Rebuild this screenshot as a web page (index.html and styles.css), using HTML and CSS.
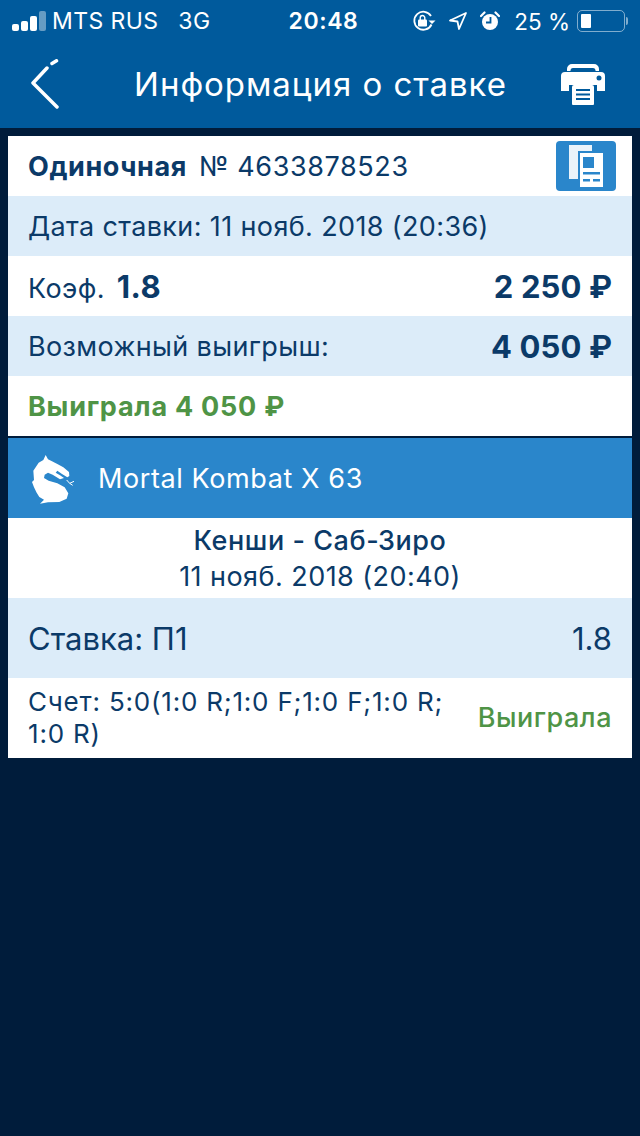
FILE: index.html
```html
<!DOCTYPE html>
<html lang="en">
<head>
    <meta charset="UTF-8">
    <meta name="viewport" content="width=device-width, initial-scale=1.0">
    <title>Информация о ставке</title>
    <link rel="stylesheet" href="styles.css">
</head>
<body>
    <header class="top-bar">
        <div class="status-bar">
            <div class="status-left">
                <span class="signal"><i></i><i></i><i></i><i class="off"></i></span>
                <span>MTS RUS</span>
                <span class="net">3G</span>
            </div>
            <div class="status-time">20:48</div>
            <div class="status-right">
                <svg class="icon-rotate" width="24" height="22" viewBox="0 0 24 22">
                    <path d="M19 6A9 9 0 1 0 19.500 14.500" fill="none" stroke="#fff" stroke-width="1.800"/>
                    <path d="M16.500 10.500h7l-3.500 3.500z" fill="#fff"/>
                    <rect x="6" y="9.500" width="9" height="7" rx="1" fill="#fff"/>
                    <path d="M8.200 10V7.800a2.300 2.300 0 0 1 4.600 0V10" fill="none" stroke="#fff" stroke-width="1.400"/>
                </svg>
                <svg class="icon-location" width="20" height="20" viewBox="0 0 20 20">
                    <path d="M18 2 2 9.500l7.500 1 1.500 7.500z" fill="none" stroke="#fff" stroke-width="1.800" stroke-linejoin="round"/>
                </svg>
                <svg class="icon-alarm" width="20" height="20" viewBox="0 0 20 20">
                    <circle cx="10" cy="11" r="8" fill="#fff"/>
                    <path d="M10.500 6v5.500H6" fill="none" stroke="#005a9c" stroke-width="1.800"/>
                    <path d="M1 5 4.500 1.500M19 5 15.500 1.500" stroke="#fff" stroke-width="2.200" stroke-linecap="round"/>
                </svg>
                <span class="battery-text">25 %</span>
                <span class="battery"><span class="battery-level"></span></span>
                <span class="battery-tip"></span>
            </div>
        </div>
        <nav class="nav-bar">
            <svg class="back-icon" width="30" height="50" viewBox="0 0 30 50">
                <path d="M17 9 3 24 27 48" fill="none" stroke="#fff" stroke-width="3.500" stroke-linecap="round" stroke-linejoin="round"/>
                <path d="M22 4.500 26.500 1.800" fill="none" stroke="#fff" stroke-width="3.500" stroke-linecap="round"/>
            </svg>
            <h1>Информация о ставке</h1>
            <svg class="print-icon" width="46" height="44" viewBox="0 0 46 44">
                <path d="M7 9V7a5 5 0 0 1 5-5h22a5 5 0 0 1 5 5v2h-3.500V8a2.500 2.500 0 0 0-2.500-2H13a2.500 2.500 0 0 0-2.500 2v1z" fill="#fff"/>
                <path d="M5 10h36a4 4 0 0 1 4 4v15H37V23H9v6H1V14a4 4 0 0 1 4-4z" fill="#fff"/>
                <circle cx="39" cy="16" r="2.500" fill="#005a9c"/>
                <path d="M12 25a2 2 0 0 1 2-2h18a2 2 0 0 1 2 2v17a1 1 0 0 1-1 1H13a1 1 0 0 1-1-1z" fill="#fff"/>
                <path d="M16 28h14M16 32.500h14M16 37h14" stroke="#005a9c" stroke-width="1.800"/>
            </svg>
        </nav>
    </header>

    <main class="bet-card">
        <div class="row row-white">
            <div class="bet-title"><b>Одиночная</b> <span>№ 4633878523</span></div>
            <button class="copy-btn">
                <svg width="36" height="44" viewBox="0 0 36 44">
                    <path d="M1 1h23v6H10v28H1z" fill="#eaf3fa"/>
                    <path d="M12 9h23v34H12z" fill="#fff"/>
                    <path d="M15 13h11v11H15z" fill="#2a86cb"/>
                    <path d="M15 28h17v2.500H15zM15 35h7v2.500h-7zM25 35h7v2.500h-7z" fill="#2a86cb"/>
                </svg>
            </button>
        </div>
        <div class="row row-blue">Дата ставки: 11 нояб. 2018 (20:36)</div>
        <div class="row row-white">
            <div>Коэф. <b class="coef">1.8</b></div>
            <b class="sum">2 250 ₽</b>
        </div>
        <div class="row row-blue">
            <div>Возможный выигрыш:</div>
            <b class="sum">4 050 ₽</b>
        </div>
        <div class="row row-white result">Выиграла 4 050 ₽</div>

        <div class="league">
            <svg class="dragon" width="60" height="56" viewBox="0 0 180 168">
                <path d="M65 15 72 28 84 34 100 42 118 52 135 66 136 78 130 82 114 72 100 62 95 68 108 76 120 84 108 88 86 74 72 68 62 74 60 84 74 92 100 100 122 112 133 130 128 146 106 156 72 157 48 161 60 149 46 141 38 128 30 112 24 96 30 90 28 62 44 38 58 30z" fill="#fff"/>
                <path d="M128 90 137 100 150 94M137 100 146 106" fill="none" stroke="#fff" stroke-width="3"/>
            </svg>
            <span>Mortal Kombat X 63</span>
        </div>
        <div class="match">
            <div class="match-name">Кенши - Саб-Зиро</div>
            <div class="match-date">11 нояб. 2018 (20:40)</div>
        </div>
        <div class="outcome">
            <span>Ставка: П1</span>
            <span>1.8</span>
        </div>
        <div class="score">
            <div class="score-text">Счет: 5:0(1:0 R;1:0 F;1:0 F;1:0 R;<br>1:0 R)</div>
            <div class="score-result">Выиграла</div>
        </div>
    </main>
</body>
</html>
```

FILE: styles.css
```css
* {
    box-sizing: border-box;
    margin: 0;
    padding: 0;
}

body {
    width: 640px;
    height: 1136px;
    overflow: hidden;
    font-family: 'Inter', 'Liberation Sans', sans-serif;
    background-color: #001c3b;
    color: #0b3a68;
}

.top-bar {
    height: 128px;
    background-color: #005a9c;
    color: white;
}

.status-bar {
    height: 40px;
    padding: 2px 12px 0 12px;
    display: grid;
    grid-template-columns: 1fr auto 1fr;
    align-items: center;
    font-size: 23px;
}

.status-left {
    display: flex;
    align-items: center;
    gap: 6px;
    letter-spacing: 0.4px;
}

.net {
    margin-left: 14px;
}

.signal {
    display: flex;
    align-items: flex-end;
    gap: 2px;
    height: 20px;
}

.signal i {
    width: 7px;
    background-color: white;
    border-radius: 2px;
}

.signal i:nth-child(1) { height: 7px; }
.signal i:nth-child(2) { height: 10px; }
.signal i:nth-child(3) { height: 15px; }
.signal i:nth-child(4) { height: 20px; }

.signal i.off {
    background-color: rgba(255, 255, 255, 0.4);
}

.status-time {
    margin-left: 7px;
    font-weight: 600;
    letter-spacing: 0.6px;
}

.status-right {
    display: flex;
    align-items: center;
    justify-content: flex-end;
    font-size: 22.500px;
}

.icon-rotate {
    margin-right: 12px;
}

.icon-location {
    margin-right: 12px;
}

.icon-alarm {
    margin-right: 14px;
}

.battery-text {
    margin-right: 7px;
}

.battery {
    width: 48px;
    height: 22px;
    padding: 3px;
    border: 1.500px solid rgba(255, 255, 255, 0.5);
    border-radius: 5px;
}

.battery-level {
    display: block;
    width: 10px;
    height: 100%;
    background-color: white;
    border-radius: 1px;
}

.battery-tip {
    width: 2px;
    height: 8px;
    margin-left: 1px;
    background-color: rgba(255, 255, 255, 0.5);
    border-radius: 0 2px 2px 0;
}

.nav-bar {
    height: 88px;
    padding: 0 34px 0 30px;
    display: flex;
    align-items: center;
    justify-content: space-between;
}

.nav-bar h1 {
    font-size: 33px;
    font-weight: 400;
    letter-spacing: 0.95px;
    margin-left: 21px;
}

.bet-card {
    margin: 8px 8px 0;
    background-color: white;
}

.row {
    height: 60px;
    padding: 0 20px;
    display: flex;
    align-items: center;
    justify-content: space-between;
    font-size: 27px;
    letter-spacing: 0.37px;
}

.row-white {
    background-color: white;
}

.row-blue {
    background-color: #dcecf9;
}

.bet-title b {
    font-weight: 700;
    letter-spacing: 0.6px;
}

.bet-title span {
    margin-left: 4px;
    letter-spacing: 0.6px;
}

.copy-btn {
    width: 60px;
    height: 50px;
    margin-right: -4px;
    display: flex;
    align-items: center;
    justify-content: center;
    background-color: #2a86cb;
    border: none;
    border-radius: 4px;
}

.coef {
    margin-left: 4px;
    font-size: 31px;
    font-weight: 700;
    letter-spacing: 0.5px;
}

.sum {
    font-size: 31px;
    font-weight: 700;
    letter-spacing: 0.1px;
}

.result {
    color: #4f9446;
    font-weight: 700;
    letter-spacing: 0.75px;
}

.league {
    height: 80px;
    margin-top: 2px;
    box-shadow: 0 -2px 0 #001c3b;
    padding-left: 16px;
    display: flex;
    align-items: center;
    gap: 14px;
    background-color: #2a86cb;
    color: white;
    font-size: 27px;
    letter-spacing: 0.6px;
}

.match {
    height: 80px;
    display: flex;
    flex-direction: column;
    align-items: center;
    justify-content: center;
    gap: 3px;
    font-size: 27px;
}

.match-name {
    font-weight: 500;
    letter-spacing: 0.55px;
}

.match-date {
    letter-spacing: 0.45px;
}

.outcome {
    height: 80px;
    padding: 0 20px;
    display: flex;
    align-items: center;
    justify-content: space-between;
    background-color: #dcecf9;
    font-size: 31px;
}

.score {
    height: 80px;
    padding: 0 20px;
    display: flex;
    align-items: center;
    justify-content: space-between;
    font-size: 26px;
    line-height: 32px;
    letter-spacing: 0.8px;
}

.score-result {
    color: #4f9446;
    font-size: 27px;
    font-weight: 500;
    letter-spacing: 0.5px;
}
```
